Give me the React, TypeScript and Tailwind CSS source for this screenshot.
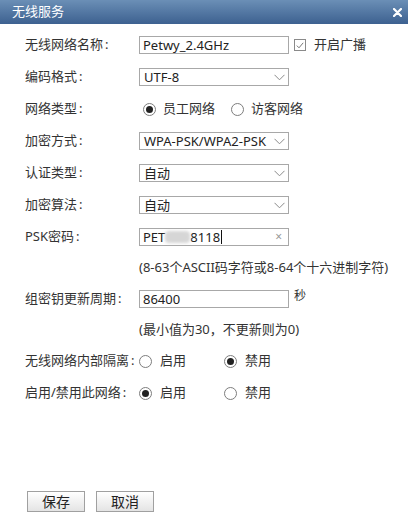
import React from "react";

const FONT = { fontFamily: '"Noto Sans", "Noto Sans CJK SC", sans-serif' };

function Chevron() {
  return (
    <svg width="11" height="7" viewBox="0 0 11 7" className="shrink-0">
      <path d="M0.5 0.8 L5.5 5.8 L10.5 0.8" fill="none" stroke="#8a8a8a" strokeWidth="1" />
    </svg>
  );
}

function Radio({ on }: { on?: boolean }) {
  return (
    <span className="flex h-[13px] w-[13px] shrink-0 items-center justify-center rounded-full border border-[#7d7d7d] bg-white">
      {on && <span className="h-[7px] w-[7px] rounded-full bg-[#222]" />}
    </span>
  );
}

function Row({ label, children }: { label: string; children: React.ReactNode }) {
  return (
    <div className="flex h-8 items-center">
      <div className="w-[114px] shrink-0 whitespace-nowrap text-[13px] text-[#333]">
        {label}
        <span className="ml-[2px]">:</span>
      </div>
      {children}
    </div>
  );
}

function Box({ children }: { children: React.ReactNode }) {
  return (
    <div className="flex h-[18px] w-[150px] items-center border border-[#a8a8a8] bg-white px-[3px] text-[13px] leading-none text-[#222]">
      {children}
    </div>
  );
}

function Select({ value }: { value: string }) {
  return (
    <Box>
      <span className="flex-1 whitespace-nowrap pl-[1px]">{value}</span>
      <Chevron />
    </Box>
  );
}

export default function App() {
  return (
    <div className="h-[521px] w-[408px] bg-white" style={FONT}>
      <div className="flex h-6 items-center justify-between bg-gradient-to-b from-[#6b8fb6] to-[#3d6190] pl-3 pr-[6px] text-white">
        <span className="text-[13px]">无线服务</span>
        <svg width="9" height="9" viewBox="0 0 9 9">
          <path d="M1 1 L8 8 M8 1 L1 8" stroke="#fff" strokeWidth="2.2" strokeLinecap="round" />
        </svg>
      </div>

      <div className="pl-[25px] pt-[5px]">
        <Row label="无线网络名称">
          <Box>
            <span>Petwy_2.4GHz</span>
          </Box>
          <span className="ml-[5px] flex h-[12px] w-[12px] items-center justify-center border border-[#8a8a8a]">
            <svg width="8" height="7" viewBox="0 0 8 7">
              <path d="M0.8 3.6 L3 5.8 L7.2 0.8" fill="none" stroke="#777" strokeWidth="1" />
            </svg>
          </span>
          <span className="ml-[8px] text-[13px] text-[#333]">开启广播</span>
        </Row>

        <Row label="编码格式">
          <Select value="UTF-8" />
        </Row>

        <Row label="网络类型">
          <span className="ml-[4px]" />
          <Radio on />
          <span className="ml-[7px] text-[13px] text-[#333]">员工网络</span>
          <span className="ml-[16px]" />
          <Radio />
          <span className="ml-[7px] text-[13px] text-[#333]">访客网络</span>
        </Row>

        <Row label="加密方式">
          <Select value="WPA-PSK/WPA2-PSK" />
        </Row>

        <Row label="认证类型">
          <Select value="自动" />
        </Row>

        <Row label="加密算法">
          <Select value="自动" />
        </Row>

        <Row label="PSK密码">
          <Box>
            <span>PET</span>
            <span className="h-[12px] w-[25px] rounded-sm bg-[#d6d6d6] blur-[1.5px]" />
            <span>8118</span>
            <span className="ml-[1px] h-[14px] w-px bg-[#111]" />
            <span className="ml-auto pr-[3px] text-[12px] text-[#999]">×</span>
          </Box>
        </Row>

        <div className="flex h-[30px] items-center pl-[114px] text-[13px] text-[#333]">
          (8-63个ASCII码字符或8-64个十六进制字符)
        </div>

        <Row label="组密钥更新周期">
          <Box>
            <span>86400</span>
          </Box>
          <span className="ml-[5px] -mt-[6px] text-[12px] text-[#333]">秒</span>
        </Row>

        <div className="flex h-[30px] items-center pl-[114px] text-[13px] text-[#333]">
          (最小值为30，不更新则为0)
        </div>

        <Row label="无线网络内部隔离">
          <Radio />
          <span className="ml-[8px] w-[64px] text-[13px] text-[#333]">启用</span>
          <Radio on />
          <span className="ml-[8px] text-[13px] text-[#333]">禁用</span>
        </Row>

        <Row label="启用/禁用此网络">
          <Radio on />
          <span className="ml-[8px] w-[64px] text-[13px] text-[#333]">启用</span>
          <Radio />
          <span className="ml-[8px] text-[13px] text-[#333]">禁用</span>
        </Row>

        <div className="mt-[82px] flex gap-[11px] pl-[2px]">
          <button className="h-[21px] w-[58px] border border-[#a0a0a0] bg-gradient-to-b from-white to-[#e4e4e4] text-[14px] leading-none text-[#222]">
            保存
          </button>
          <button className="h-[21px] w-[58px] border border-[#a0a0a0] bg-gradient-to-b from-white to-[#e4e4e4] text-[14px] leading-none text-[#222]">
            取消
          </button>
        </div>
      </div>
    </div>
  );
}
